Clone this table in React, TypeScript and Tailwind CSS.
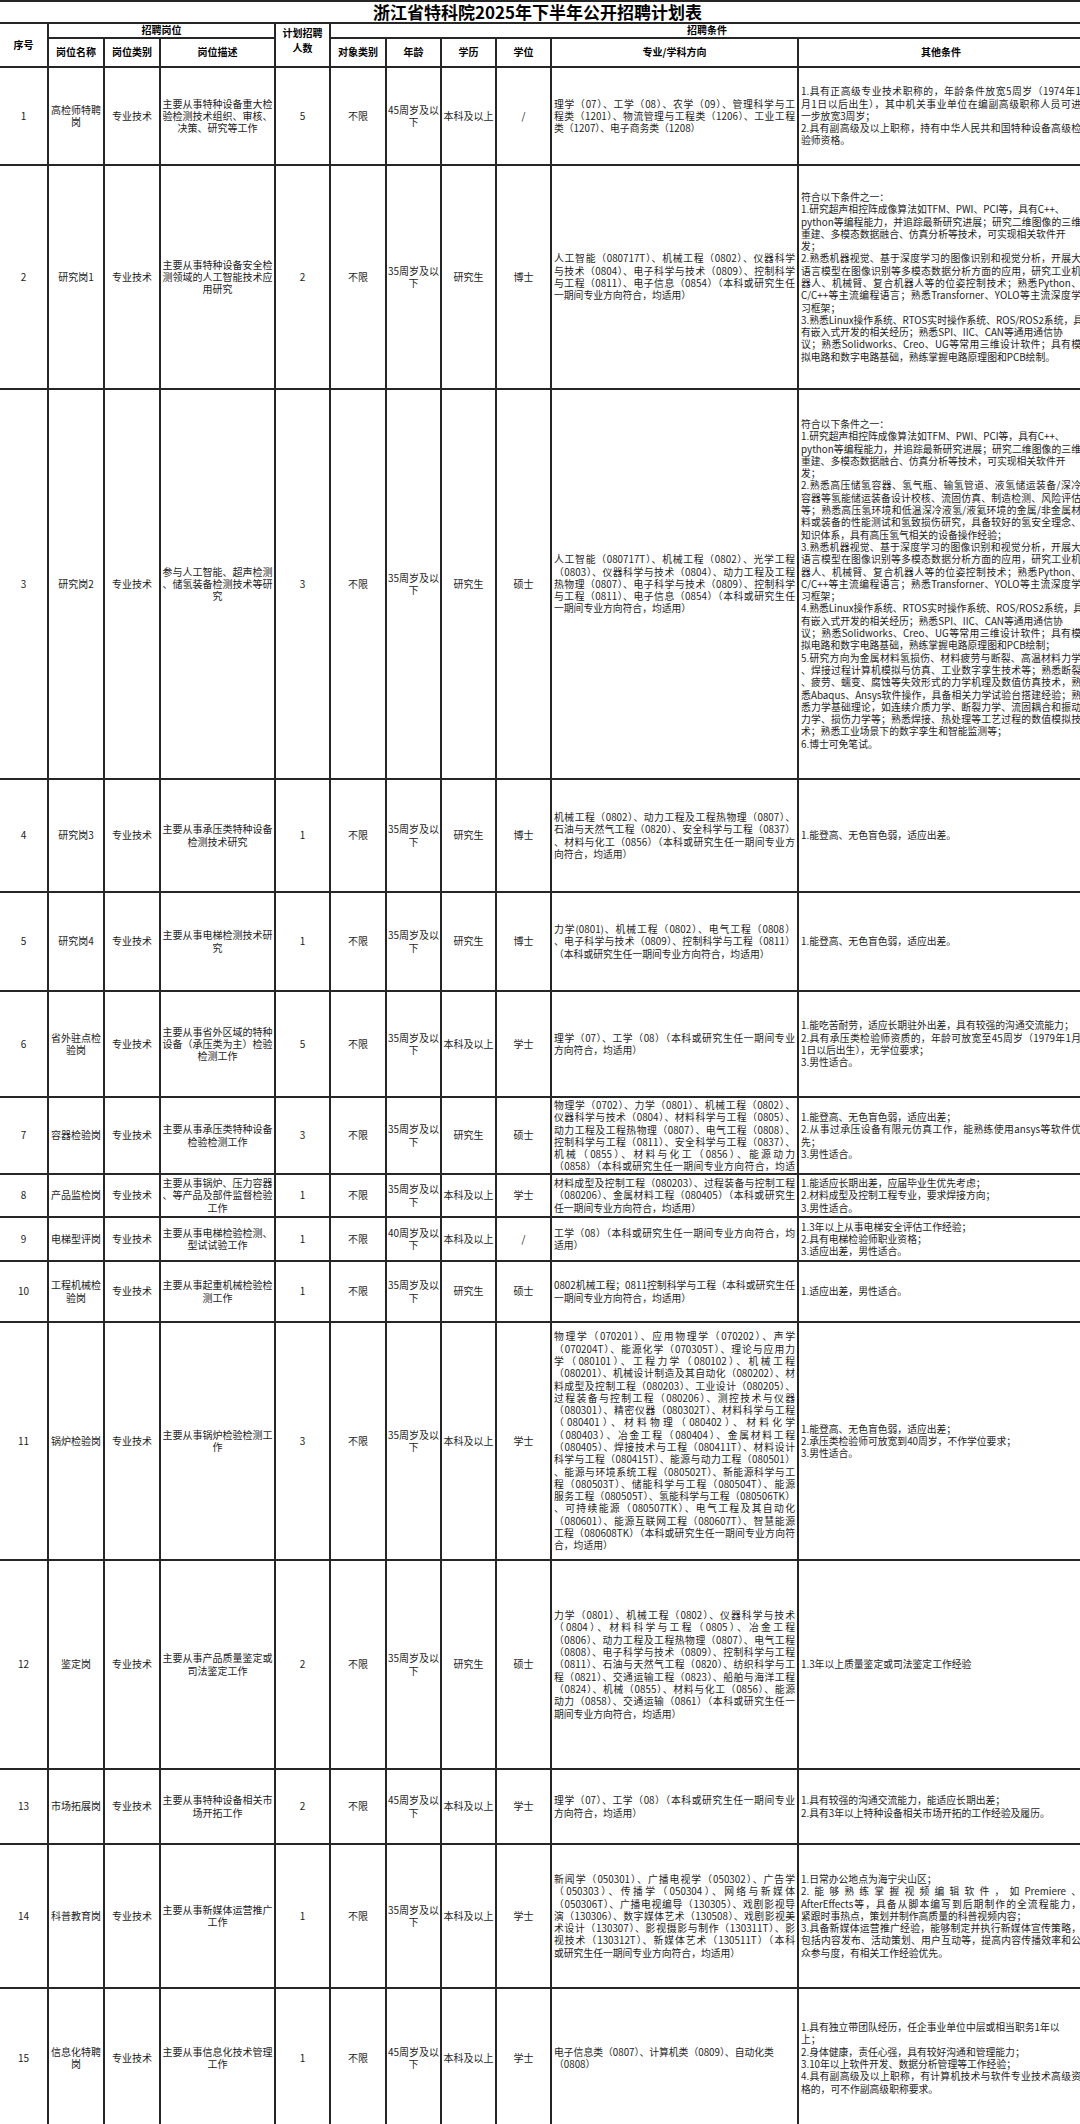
import React from 'react';

type Row = {
  no: string;
  name: string[];
  desc: string[];
  count: string;
  age: string[];
  edu: string;
  deg: string;
  h: string;
  major: string[];
  other: string[];
  clipMajor?: boolean;
};

const rows: Row[] = [
  {
    no: '1', name: ['高检师特聘', '岗'], desc: ['主要从事特种设备重大检', '验检测技术组织、审核、', '决策、研究等工作'], count: '5', age: ['45周岁及以', '下'], edu: '本科及以上', deg: '/', h: 'h-[98px]',
    major: ['理学（07）、工学（08）、农学（09）、管理科学与工', '程类（1201）、物流管理与工程类（1206）、工业工程', '类（1207）、电子商务类（1208）'],
    other: ['1.具有正高级专业技术职称的，年龄条件放宽5周岁（1974年1', '月1日以后出生），其中机关事业单位在编副高级职称人员可进', '一步放宽3周岁；', '2.具有副高级及以上职称，持有中华人民共和国特种设备高级检', '验师资格。'],
  },
  {
    no: '2', name: ['研究岗1'], desc: ['主要从事特种设备安全检', '测领域的人工智能技术应', '用研究'], count: '2', age: ['35周岁及以', '下'], edu: '研究生', deg: '博士', h: 'h-[224px]',
    major: ['人工智能（080717T）、机械工程（0802）、仪器科学', '与技术（0804）、电子科学与技术（0809）、控制科学', '与工程（0811）、电子信息（0854）（本科或研究生任', '一期间专业方向符合，均适用）'],
    other: [
      '符合以下条件之一：',
      '~1.研究超声相控阵成像算法如TFM、PWI、PCI等，具有C++、',
      'python等编程能力，并追踪最新研究进展；研究二维图像的三维',
      '~重建、多模态数据融合、仿真分析等技术，可实现相关软件开',
      '发；',
      '2.熟悉机器视觉、基于深度学习的图像识别和视觉分析，开展大',
      '语言模型在图像识别等多模态数据分析方面的应用，研究工业机',
      '器人、机械臂、复合机器人等的位姿控制技术；熟悉Python、',
      'C/C++等主流编程语言；熟悉Transforner、YOLO等主流深度学',
      '习框架；',
      '~3.熟悉Linux操作系统、RTOS实时操作系统、ROS/ROS2系统，具',
      '~有嵌入式开发的相关经历；熟悉SPI、IIC、CAN等通用通信协',
      '议；熟悉Solidworks、Creo、UG等常用三维设计软件；具有模',
      '拟电路和数字电路基础，熟练掌握电路原理图和PCB绘制。',
    ],
  },
  {
    no: '3', name: ['研究岗2'], desc: ['参与人工智能、超声检测', '、储氢装备检测技术等研', '究'], count: '3', age: ['35周岁及以', '下'], edu: '研究生', deg: '硕士', h: 'h-[390px]',
    major: ['人工智能（080717T）、机械工程（0802）、光学工程', '（0803）、仪器科学与技术（0804）、动力工程及工程', '热物理（0807）、电子科学与技术（0809）、控制科学', '与工程（0811）、电子信息（0854）（本科或研究生任', '一期间专业方向符合，均适用）'],
    other: [
      '符合以下条件之一：',
      '~1.研究超声相控阵成像算法如TFM、PWI、PCI等，具有C++、',
      'python等编程能力，并追踪最新研究进展；研究二维图像的三维',
      '~重建、多模态数据融合、仿真分析等技术，可实现相关软件开',
      '发；',
      '2.熟悉高压储氢容器、氢气瓶、输氢管道、液氢储运装备/深冷',
      '容器等氢能储运装备设计校核、流固仿真、制造检测、风险评估',
      '等；熟悉高压氢环境和低温深冷液氢/液氦环境的金属/非金属材',
      '料或装备的性能测试和氢致损伤研究，具备较好的氢安全理念、',
      '知识体系，具有高压氢气相关的设备操作经验；',
      '3.熟悉机器视觉、基于深度学习的图像识别和视觉分析，开展大',
      '语言模型在图像识别等多模态数据分析方面的应用，研究工业机',
      '器人、机械臂、复合机器人等的位姿控制技术；熟悉Python、',
      'C/C++等主流编程语言；熟悉Transforner、YOLO等主流深度学',
      '习框架；',
      '~4.熟悉Linux操作系统、RTOS实时操作系统、ROS/ROS2系统，具',
      '~有嵌入式开发的相关经历；熟悉SPI、IIC、CAN等通用通信协',
      '议；熟悉Solidworks、Creo、UG等常用三维设计软件；具有模',
      '拟电路和数字电路基础，熟练掌握电路原理图和PCB绘制；',
      '5.研究方向为金属材料氢损伤、材料疲劳与断裂、高温材料力学',
      '、焊接过程计算机模拟与仿真、工业数字孪生技术等；熟悉断裂',
      '、疲劳、蠕变、腐蚀等失效形式的力学机理及数值仿真技术，熟',
      '悉Abaqus、Ansys软件操作，具备相关力学试验台搭建经验；熟',
      '悉力学基础理论，如连续介质力学、断裂力学、流固耦合和振动',
      '力学、损伤力学等；熟悉焊接、热处理等工艺过程的数值模拟技',
      '术；熟悉工业场景下的数字孪生和智能监测等；',
      '6.博士可免笔试。',
    ],
  },
  {
    no: '4', name: ['研究岗3'], desc: ['主要从事承压类特种设备', '检测技术研究'], count: '1', age: ['35周岁及以', '下'], edu: '研究生', deg: '博士', h: 'h-[113px]',
    major: ['机械工程（0802）、动力工程及工程热物理（0807）、', '石油与天然气工程（0820）、安全科学与工程（0837）', '、材料与化工（0856）（本科或研究生任一期间专业方', '向符合，均适用）'],
    other: ['1.能登高、无色盲色弱，适应出差。'],
  },
  {
    no: '5', name: ['研究岗4'], desc: ['主要从事电梯检测技术研', '究'], count: '1', age: ['35周岁及以', '下'], edu: '研究生', deg: '博士', h: 'h-[99px]',
    major: ['力学(0801)、机械工程（0802）、电气工程（0808）', '、电子科学与技术（0809）、控制科学与工程（0811）', '（本科或研究生任一期间专业方向符合，均适用）'],
    other: ['1.能登高、无色盲色弱，适应出差。'],
  },
  {
    no: '6', name: ['省外驻点检', '验岗'], desc: ['主要从事省外区域的特种', '设备（承压类为主）检验', '检测工作'], count: '5', age: ['35周岁及以', '下'], edu: '本科及以上', deg: '学士', h: 'h-[106px]',
    major: ['理学（07）、工学（08）（本科或研究生任一期间专业', '方向符合，均适用）'],
    other: ['1.能吃苦耐劳，适应长期驻外出差，具有较强的沟通交流能力；', '2.具有承压类检验师资质的，年龄可放宽至45周岁（1979年1月', '1日以后出生），无学位要求；', '3.男性适合。'],
  },
  {
    no: '7', name: ['容器检验岗'], desc: ['主要从事承压类特种设备', '检验检测工作'], count: '3', age: ['35周岁及以', '下'], edu: '研究生', deg: '硕士', h: 'h-[77px]', clipMajor: true,
    major: ['物理学（0702）、力学（0801）、机械工程（0802）、', '仪器科学与技术（0804）、材料科学与工程（0805）、', '动力工程及工程热物理（0807）、电气工程（0808）、', '控制科学与工程（0811）、安全科学与工程（0837）、', '机械（0855）、材料与化工（0856）、能源动力', '（0858）（本科或研究生任一期间专业方向符合，均适', '用）'],
    other: ['1.能登高、无色盲色弱，适应出差；', '2.从事过承压设备有限元仿真工作，能熟练使用ansys等软件优', '先；', '3.男性适合。'],
  },
  {
    no: '8', name: ['产品监检岗'], desc: ['主要从事锅炉、压力容器', '、等产品及部件监督检验', '工作'], count: '1', age: ['35周岁及以', '下'], edu: '本科及以上', deg: '学士', h: 'h-[43px]',
    major: ['材料成型及控制工程（080203）、过程装备与控制工程', '（080206）、金属材料工程（080405）（本科或研究生', '任一期间专业方向符合，均适用）'],
    other: ['1.能适应长期出差，应届毕业生优先考虑；', '2.材料成型及控制工程专业，要求焊接方向；', '3.男性适合。'],
  },
  {
    no: '9', name: ['电梯型评岗'], desc: ['主要从事电梯检验检测、', '型试试验工作'], count: '1', age: ['40周岁及以', '下'], edu: '本科及以上', deg: '/', h: 'h-[44px]',
    major: ['工学（08）（本科或研究生任一期间专业方向符合，均', '适用）'],
    other: ['1.3年以上从事电梯安全评估工作经验；', '2.具有电梯检验师职业资格；', '3.适应出差，男性适合。'],
  },
  {
    no: '10', name: ['工程机械检', '验岗'], desc: ['主要从事起重机械检验检', '测工作'], count: '1', age: ['35周岁及以', '下'], edu: '研究生', deg: '硕士', h: 'h-[61px]',
    major: ['0802机械工程；0811控制科学与工程（本科或研究生任', '一期间专业方向符合，均适用）'],
    other: ['1.适应出差，男性适合。'],
  },
  {
    no: '11', name: ['锅炉检验岗'], desc: ['主要从事锅炉检验检测工', '作'], count: '3', age: ['35周岁及以', '下'], edu: '本科及以上', deg: '学士', h: 'h-[238px]',
    major: [
      '物理学（070201）、应用物理学（070202）、声学',
      '（070204T）、能源化学（070305T）、理论与应用力',
      '学（080101）、工程力学（080102）、机械工程',
      '（080201）、机械设计制造及其自动化（080202）、材',
      '料成型及控制工程（080203）、工业设计（080205）、',
      '过程装备与控制工程（080206）、测控技术与仪器',
      '（080301）、精密仪器（080302T）、材料科学与工程',
      '（080401）、材料物理（080402）、材料化学',
      '（080403）、冶金工程（080404）、金属材料工程',
      '（080405）、焊接技术与工程（080411T）、材料设计',
      '科学与工程（080415T）、能源与动力工程（080501）',
      '、能源与环境系统工程（080502T）、新能源科学与工',
      '程（080503T）、储能科学与工程（080504T）、能源',
      '服务工程（080505T）、氢能科学与工程（080506TK）',
      '、可持续能源（080507TK）、电气工程及其自动化',
      '（080601）、能源互联网工程（080607T）、智慧能源',
      '工程（080608TK）（本科或研究生任一期间专业方向符',
      '合，均适用）',
    ],
    other: ['1.能登高、无色盲色弱，适应出差；', '2.承压类检验师可放宽到40周岁，不作学位要求；', '3.男性适合。'],
  },
  {
    no: '12', name: ['鉴定岗'], desc: ['主要从事产品质量鉴定或', '司法鉴定工作'], count: '2', age: ['35周岁及以', '下'], edu: '研究生', deg: '硕士', h: 'h-[209px]',
    major: [
      '力学（0801）、机械工程（0802）、仪器科学与技术',
      '（0804）、材料科学与工程（0805）、冶金工程',
      '（0806）、动力工程及工程热物理（0807）、电气工程',
      '（0808）、电子科学与技术（0809）、控制科学与工程',
      '（0811）、石油与天然气工程（0820）、纺织科学与工',
      '程（0821）、交通运输工程（0823）、船舶与海洋工程',
      '（0824）、机械（0855）、材料与化工（0856）、能源',
      '动力（0858）、交通运输（0861）（本科或研究生任一',
      '期间专业方向符合，均适用）',
    ],
    other: ['1.3年以上质量鉴定或司法鉴定工作经验'],
  },
  {
    no: '13', name: ['市场拓展岗'], desc: ['主要从事特种设备相关市', '场开拓工作'], count: '2', age: ['45周岁及以', '下'], edu: '本科及以上', deg: '学士', h: 'h-[75px]',
    major: ['理学（07）、工学（08）（本科或研究生任一期间专业', '方向符合，均适用）'],
    other: ['1.具有较强的沟通交流能力，能适应长期出差；', '2.具有3年以上特种设备相关市场开拓的工作经验及履历。'],
  },
  {
    no: '14', name: ['科普教育岗'], desc: ['主要从事新媒体运营推广', '工作'], count: '1', age: ['35周岁及以', '下'], edu: '本科及以上', deg: '学士', h: 'h-[144px]',
    major: [
      '新闻学（050301）、广播电视学（050302）、广告学',
      '（050303）、传播学（050304）、网络与新媒体',
      '（050306T）、广播电视编导（130305）、戏剧影视导',
      '演（130306）、数字媒体艺术（130508）、戏剧影视美',
      '术设计（130307）、影视摄影与制作（130311T）、影',
      '视技术（130312T）、新媒体艺术（130511T）（本科',
      '或研究生任一期间专业方向符合，均适用）',
    ],
    other: [
      '1.日常办公地点为海宁尖山区；',
      '2.能够熟练掌握视频编辑软件，如Premiere、',
      'AfterEffects等，具备从脚本编写到后期制作的全流程能力，',
      '紧跟时事热点，策划并制作高质量的科普视频内容；',
      '3.具备新媒体运营推广经验，能够制定并执行新媒体宣传策略，',
      '包括内容发布、活动策划、用户互动等，提高内容传播效率和公',
      '众参与度，有相关工作经验优先。',
    ],
  },
  {
    no: '15', name: ['信息化特聘', '岗'], desc: ['主要从事信息化技术管理', '工作'], count: '1', age: ['45周岁及以', '下'], edu: '本科及以上', deg: '学士', h: 'h-[140px]',
    major: ['~电子信息类（0807）、计算机类（0809）、自动化类', '（0808）'],
    other: [
      '~1.具有独立带团队经历，任企事业单位中层或相当职务1年以',
      '上；',
      '2.身体健康，责任心强，具有较好沟通和管理能力；',
      '3.10年以上软件开发、数据分析管理等工作经验；',
      '4.具有副高级及以上职称，有计算机技术与软件专业技术高级资',
      '格的，可不作副高级职称要求。',
    ],
  },
];

function Lines({ lines }: { lines: string[] }) {
  return (
    <>
      {lines.map((raw, i) => {
        const noJ = raw.startsWith('~');
        const t = noJ ? raw.slice(1) : raw;
        const next = lines[i + 1];
        const paraEnd = next === undefined || /^~?\d+\./.test(next);
        const j = !noJ && !paraEnd;
        return (
          <div key={i} className={j ? 'text-justify [text-align-last:justify]' : 'whitespace-nowrap'}>
            {t}
          </div>
        );
      })}
    </>
  );
}

function Br({ lines }: { lines: string[] }) {
  return (
    <>
      {lines.map((l, i) => (
        <React.Fragment key={i}>
          {i > 0 && <br />}
          {l}
        </React.Fragment>
      ))}
    </>
  );
}

const cell = 'border-2 border-[#262626] p-0 align-middle';
const cc = cell + ' text-center whitespace-nowrap';
const hc = cell + ' text-center font-bold text-black whitespace-nowrap';
const tc = cell + ' px-[2px] text-[9.8px]';

export default function App() {
  return (
    <div className="w-[1080px] h-[2124px] overflow-hidden bg-white font-['Noto_Sans_CJK_SC','Noto_Sans',sans-serif] text-[10px] leading-[12.3px] text-[#1c1c1c]">
      <table className="table-fixed border-collapse w-[1084px]">
        <colgroup>
          <col className="w-[48px]" />
          <col className="w-[56px]" />
          <col className="w-[56px]" />
          <col className="w-[115px]" />
          <col className="w-[55px]" />
          <col className="w-[56px]" />
          <col className="w-[55px]" />
          <col className="w-[55px]" />
          <col className="w-[55px]" />
          <col className="w-[247px]" />
          <col className="w-[286px]" />
        </colgroup>
        <tbody>
          <tr className="h-[22px]">
            <td colSpan={11} className="border-2 border-l-0 border-[#262626] p-0 pr-[8px] text-center align-middle font-bold text-[17px] leading-[20px] text-black">
              浙江省特科院2025年下半年公开招聘计划表
            </td>
          </tr>
          <tr className="h-[15px]">
            <td rowSpan={2} className={hc + ' border-l-0'}>序号</td>
            <td colSpan={3} className={hc}>招聘岗位</td>
            <td rowSpan={2} className={cell + ' text-center font-bold text-black align-top pt-[1px] leading-[15px]'}>
              计划招聘<br />人数
            </td>
            <td colSpan={6} className={hc}>招聘条件</td>
          </tr>
          <tr className="h-[29px]">
            <td className={hc}>岗位名称</td>
            <td className={hc}>岗位类别</td>
            <td className={hc}>岗位描述</td>
            <td className={hc}>对象类别</td>
            <td className={hc}>年龄</td>
            <td className={hc}>学历</td>
            <td className={hc}>学位</td>
            <td className={hc}>专业/学科方向</td>
            <td className={hc}>其他条件</td>
          </tr>
          {rows.map((r) => (
            <tr key={r.no} className={r.h}>
              <td className={cc + ' border-l-0'}>{r.no}</td>
              <td className={cc}><Br lines={r.name} /></td>
              <td className={cc}>专业技术</td>
              <td className={cc}><Br lines={r.desc} /></td>
              <td className={cc}>{r.count}</td>
              <td className={cc}>不限</td>
              <td className={cc}><Br lines={r.age} /></td>
              <td className={cc}>{r.edu}</td>
              <td className={cc}>{r.deg}</td>
              {r.clipMajor ? (
                <td className={tc + ' align-top pt-[1px]'}>
                  <div className="h-[74px] overflow-hidden">
                    <Lines lines={r.major} />
                  </div>
                </td>
              ) : (
                <td className={tc}>
                  <Lines lines={r.major} />
                </td>
              )}
              <td className={tc}>
                <Lines lines={r.other} />
              </td>
            </tr>
          ))}
        </tbody>
      </table>
    </div>
  );
}
